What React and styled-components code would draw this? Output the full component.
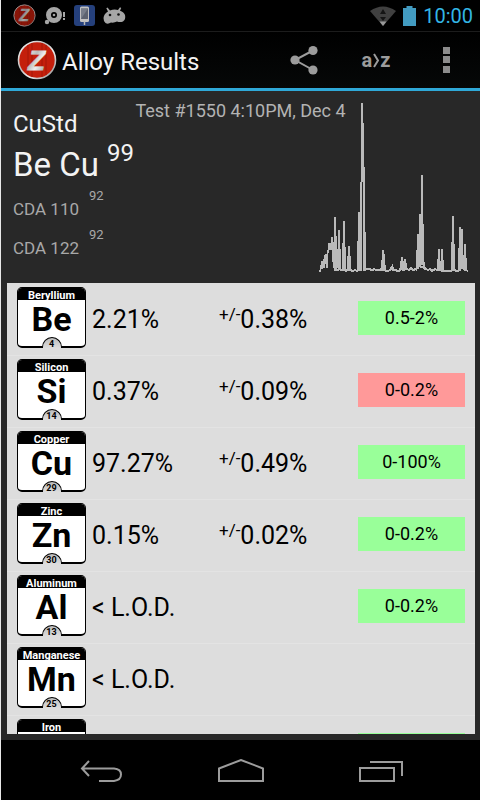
import React from 'react';
import styled, { createGlobalStyle } from 'styled-components';

const GlobalStyle = createGlobalStyle`
  * {
    box-sizing: border-box;
  }

  body {
    margin: 0;
    background: #000;
    font-family: Roboto, 'Noto Sans', sans-serif;
  }

  button {
    display: flex;
    align-items: center;
    justify-content: center;
    padding: 0;
    border: none;
    background: none;
    color: inherit;
    font: inherit;
    cursor: pointer;
  }
`;

const Screen = styled.div`
  display: flex;
  flex-direction: column;
  height: 100vh;
  border-left: 1px solid #e8e8e8;
  background: #282828;
  color: #f3f3f3;
`;

const StatusBar = styled.div`
  display: flex;
  flex: none;
  align-items: center;
  height: 32px;
  padding: 0 7px 0 12px;
  border-bottom: 1px solid #1c1c1c;
  background: #000;
`;

const StatusIcons = styled.div`
  display: flex;
  flex: 1;
  align-items: center;
  gap: 8px;
`;

const SystemIcons = styled.div`
  display: flex;
  align-items: center;
  gap: 7px;
`;

const Clock = styled.time`
  color: #33b5e5;
  font-size: 20px;
  line-height: 24px;
`;

const ActionBar = styled.header`
  display: flex;
  flex: none;
  align-items: center;
  height: 59px;
  padding-left: 16px;
  border-bottom: 3px solid #2fa9d8;
  background: linear-gradient(#000, #060808);
`;

const Title = styled.h1`
  flex: 1;
  margin: 0;
  padding: 4px 0 0 5px;
  font-size: 24px;
  font-weight: 400;
  line-height: 32px;
  white-space: nowrap;
`;

const Action = styled.button`
  width: ${props => props.$width || 72}px;
  height: 56px;
`;

const Summary = styled.section`
  display: grid;
  flex: none;
  padding: 8px 12px 11px;

  > * {
    grid-area: 1 / 1;
  }
`;

const TestLabel = styled.div`
  justify-self: center;
  color: #b3b3b3;
  font-size: 18px;
  line-height: 24px;
`;

const Matches = styled.div`
  display: flex;
  flex-direction: column;
  padding: 10px 0 5px;
`;

const Sample = styled.div`
  font-size: 24px;
  line-height: 30px;
`;

const Match = styled.div`
  display: flex;
  align-items: flex-start;
  gap: 10px;
  height: 39px;
  color: #a8a8a8;
  font-size: 17px;
  line-height: 40px;
`;

const Score = styled.span`
  font-size: 13px;
  line-height: 14px;
`;

const BestMatch = styled(Match)`
  gap: 8px;
  height: 50px;
  color: #f3f3f3;
  font-size: 33px;
  line-height: 52px;

  ${Score} {
    font-size: 24px;
    line-height: 28px;
  }
`;

const Spectrum = styled.svg`
  justify-self: end;
  align-self: end;
  color: #bababa;
`;

const ResultList = styled.main`
  flex: 1;
  min-height: 0;
  margin: 0 5px 6px 6px;
  overflow-y: auto;
  scrollbar-width: none;
  background: #ddd;
  color: #000;
`;

const ResultTable = styled.table`
  width: 100%;
  border-collapse: collapse;
  table-layout: fixed;
`;

const Row = styled.tr`
  height: 72px;
  border-bottom: 1px solid #e3e3e3;
`;

const Cell = styled.td`
  padding: 2px 0 0;
  font-size: 25px;
  font-weight: 400;
  line-height: 32px;
  text-align: left;
  white-space: nowrap;
`;

const TileCell = styled(Cell).attrs({ as: 'th', scope: 'row' })`
  width: 85px;
  padding: 0 0 3px 10px;
`;

const AmountCell = styled(Cell)`
  width: 127px;
`;

const RangeCell = styled(Cell)`
  width: 117px;
  padding: 0 10px 2px 0;
`;

const PlusMinus = styled.span`
  display: inline-block;
  vertical-align: 8px;
  font-size: 17px;
  line-height: 16px;
`;

const Range = styled.div`
  background: ${props => (props.$out ? '#ff9999' : '#99ff99')};
  font-size: 18px;
  line-height: 34px;
  text-align: center;
`;

const Tile = styled.div`
  position: relative;
  width: 69px;
  height: 61px;
  border: 1px solid #000;
  border-bottom-width: 2px;
  border-radius: 5px;
  background: #fff;
  text-align: center;
`;

const ElementName = styled.div`
  height: 12px;
  border-radius: 4px 4px 0 0;
  background: #000;
  color: #fff;
  font-size: 11px;
  font-weight: 700;
  line-height: 15px;
`;

const Symbol = styled.div`
  padding-top: 2px;
  font-size: 34px;
  font-weight: 700;
  line-height: 34px;
`;

const AtomicNumber = styled.div`
  position: absolute;
  bottom: -2px;
  left: 50%;
  width: 20px;
  height: 11px;
  margin-left: -10px;
  border: 1px solid #000;
  border-bottom: none;
  border-radius: 10px 10px 0 0;
  background: linear-gradient(#bbb, #ddd);
  font-size: 9px;
  font-weight: 700;
  line-height: 12px;
`;

const NavBar = styled.nav`
  display: flex;
  flex: none;
  height: 60px;
  padding: 0 30px;
  background: #000;
`;

const NavButton = styled.button`
  flex: 1;
  height: 100%;
  padding-top: 4px;
`;

const elements = [
  { name: 'Beryllium', symbol: 'Be', number: 4, amount: '2.21%', error: '0.38%', range: '0.5-2%' },
  { name: 'Silicon', symbol: 'Si', number: 14, amount: '0.37%', error: '0.09%', range: '0-0.2%', out: true },
  { name: 'Copper', symbol: 'Cu', number: 29, amount: '97.27%', error: '0.49%', range: '0-100%' },
  { name: 'Zinc', symbol: 'Zn', number: 30, amount: '0.15%', error: '0.02%', range: '0-0.2%' },
  { name: 'Aluminum', symbol: 'Al', number: 13, range: '0-0.2%' },
  { name: 'Manganese', symbol: 'Mn', number: 25 },
  { name: 'Iron', symbol: 'Fe', number: 26, range: '0-0.2%' },
];

// [x, width, top, bottom] of each run of channels
const channels = [
  [1, 1, 162, 168], [2, 2, 158, 166], [4, 1, 156, 165], [5, 1, 152, 165],
  [6, 2, 151, 161], [7, 2, 151, 165], [8, 1, 147, 165], [9, 1, 140, 150],
  [10, 2, 140, 147], [12, 1, 134, 147], [13, 1, 134, 159], [14, 1, 139, 165],
  [15, 2, 114, 168], [17, 1, 133, 168], [18, 1, 146, 165], [19, 2, 127, 166],
  [21, 1, 146, 166], [23, 1, 140, 168], [24, 2, 118, 168], [26, 1, 144, 168],
  [28, 1, 153, 168], [29, 2, 143, 168], [31, 1, 153, 168], [38, 1, 138, 168],
  [39, 2, 109, 168], [41, 1, 79, 168], [42, 1, 0, 168], [43, 1, 0, 79],
  [44, 1, 20, 129], [44, 1, 79, 168], [45, 1, 64, 168], [46, 1, 129, 168],
  [62, 1, 157, 168], [63, 2, 147, 168], [65, 1, 151, 168], [66, 1, 162, 168],
  [73, 1, 161, 168], [74, 1, 164, 168], [81, 1, 158, 166], [82, 2, 154, 166],
  [84, 1, 158, 168], [85, 2, 156, 166], [87, 1, 160, 167], [97, 1, 147, 168],
  [98, 2, 131, 166], [100, 2, 111, 162], [102, 2, 72, 162], [104, 1, 121, 164],
  [105, 1, 159, 167], [118, 1, 156, 168], [119, 2, 146, 168], [121, 1, 158, 168],
  [122, 2, 146, 168], [124, 1, 157, 168], [132, 1, 139, 168], [133, 2, 113, 168],
  [135, 1, 141, 168], [139, 1, 145, 168], [140, 2, 124, 168], [142, 2, 126, 163],
  [144, 1, 152, 166], [145, 2, 141, 168], [147, 1, 155, 167],
];

const channelPath = channels
  .map(([x, width, top, bottom]) => `M${x} ${top}h${width}V${bottom}h-${width}z`)
  .join('');

function SpectrumChart() {
  return (
    <Spectrum width="149" height="169" viewBox="0 0 149 169" role="img" aria-label="Spectrum">
      <g shapeRendering="crispEdges">
        <path d={channelPath} fill="currentColor" />
        <path
          d="M0 168H2M17 167H19L20 165L22 167L25 166L27 168L29 166L31 167L34 168L36 167L38 168L40 166M46 166H51L52 167H54L55 166L57 167H60L62 166V168M66 168H69L71 167L73 164L75 167L80 168L82 165L84 167L88 166L90 167L92 165L94 167L97 166L99 163L104 164L107 166L109 167L111 166L113 168L116 166L118 167L121 165L123 168H132L134 167L139 168L141 166L143 163L145 166L147 167L149 168"
          fill="none"
          stroke="currentColor"
          strokeWidth="2"
        />
      </g>
    </Spectrum>
  );
}

function AppLogo({ size, id, dim }) {
  return (
    <svg width={size} height={size} viewBox="0 0 40 40" opacity={dim ? 0.7 : 1} aria-hidden="true">
      <defs>
        <linearGradient id={id} x1="0" y1="0" x2="1" y2="1">
          <stop offset="0" stopColor="#fff" />
          <stop offset="0.4" stopColor="#bbb" />
          <stop offset="0.6" stopColor="#eee" />
          <stop offset="1" stopColor="#888" />
        </linearGradient>
      </defs>
      <circle cx="20" cy="20" r="18.5" fill="#c41f0c" stroke={`url(#${id})`} strokeWidth="1.6" />
      <path d="M11 5v30M15 3v34M25 3v34M29 5v30" stroke="#a91a0a" strokeWidth="1.2" />
      <text
        x="19.5"
        y="29.5"
        textAnchor="middle"
        fontFamily="'Liberation Sans', sans-serif"
        fontSize="28"
        fontWeight="700"
        fontStyle="italic"
        fill={`url(#${id})`}
        stroke={`url(#${id})`}
        strokeWidth="0.8"
      >
        Z
      </text>
    </svg>
  );
}

function DiscIcon() {
  return (
    <svg width="22" height="20" viewBox="0 0 22 20" fill="#a6a6a6" aria-hidden="true">
      <path fillRule="evenodd" d="M10 1a8 8 0 1 1 0 16a8 8 0 0 1 0-16zM10 6a3 3 0 1 0 0 6a3 3 0 0 0 0-6z" />
      <circle cx="10" cy="9" r="1.3" />
      <circle cx="3" cy="16" r="2.2" />
      <path d="M19 6h2v5h-2zM19 12h2v2h-2z" />
    </svg>
  );
}

function PhoneIcon() {
  return (
    <svg width="21" height="21" viewBox="0 0 21 21" aria-hidden="true">
      <rect width="21" height="21" rx="3" fill="#25407c" />
      <rect x="6" y="1.5" width="9" height="15.5" rx="1.5" fill="#c2c2c2" />
      <rect x="7" y="3.5" width="7" height="10.5" fill="#5d6370" />
      <path d="M7 14V3.5h7z" fill="#777d89" />
      <path d="M10.5 16v4" stroke="#b9b9b9" strokeWidth="1.5" />
    </svg>
  );
}

function AndroidIcon() {
  return (
    <svg width="23" height="18" viewBox="0 0 23 18" aria-hidden="true">
      <path
        d="M4.500 .5L7 3.500Q11 2 15 3L17 .3L18.200 1L17 3.700Q21 5 22 8Q23 12.500 20 14.500Q17 15.500 14 14.500Q11 16 8 15.500Q5 17.500 2.500 16Q.5 14.500 .5 11Q1 6.500 5 4.500L3.300 1.300z"
        fill="#a6a6a6"
      />
      <circle cx="7" cy="8" r="1.3" fill="#111" />
      <circle cx="15.5" cy="7.5" r="1.3" fill="#111" />
    </svg>
  );
}

function WifiIcon() {
  return (
    <svg width="26" height="20" viewBox="0 0 26 20" aria-hidden="true">
      <path d="M0 5Q13-4 26 5L13 20z" fill="#404040" />
      <path d="M9.5 15.5h7L13 20z" fill="#999" />
      <path d="M13 3l3 5h-6zM10 11h6l-3 4z" fill="#151515" />
    </svg>
  );
}

function BatteryIcon() {
  return (
    <svg width="13" height="20" viewBox="0 0 13 20" aria-hidden="true">
      <path d="M3.5 0h6v2H13v18H0V2h3.500z" fill="#429bc1" />
    </svg>
  );
}

function ShareIcon() {
  return (
    <svg width="28" height="30" viewBox="0 0 28 30" fill="#9c9c9c" aria-hidden="true">
      <path d="M23 5.5L5 15l18 10" fill="none" stroke="#9c9c9c" strokeWidth="2" />
      <circle cx="23" cy="5.5" r="4.6" />
      <circle cx="5" cy="15" r="4.6" />
      <circle cx="23" cy="25" r="4.6" />
    </svg>
  );
}

const SortLabel = styled.span`
  display: flex;
  align-items: center;
  color: #9c9c9c;
  font-size: 20px;
  font-weight: 700;
  line-height: 24px;
`;

function Chevron() {
  return (
    <svg width="8" height="15" viewBox="0 0 8 15" aria-hidden="true">
      <path d="M2 1l4 6.500l-4 6.500" fill="none" stroke="#9c9c9c" strokeWidth="2" />
    </svg>
  );
}

function OverflowIcon() {
  return (
    <svg width="7" height="26" viewBox="0 0 7 26" fill="#8c8c8c" aria-hidden="true">
      <path d="M0 0h7v7H0zM0 9h7v7H0zM0 19h7v7H0z" />
    </svg>
  );
}

function NavIcon({ d, width }) {
  return (
    <svg width={width} height="26" viewBox={`0 0 ${width} 26`} aria-hidden="true">
      <path d={d} fill="none" stroke="#9c9c9c" strokeWidth="2" />
    </svg>
  );
}

function ResultRow({ element }) {
  return (
    <Row>
      <TileCell>
        <Tile>
          <ElementName>{element.name}</ElementName>
          <Symbol>{element.symbol}</Symbol>
          <AtomicNumber>{element.number}</AtomicNumber>
        </Tile>
      </TileCell>
      <AmountCell>{element.amount || '< L.O.D.'}</AmountCell>
      <Cell>
        {element.error && (
          <>
            <PlusMinus>+/-</PlusMinus>
            {element.error}
          </>
        )}
      </Cell>
      <RangeCell>
        {element.range && <Range $out={element.out}>{element.range}</Range>}
      </RangeCell>
    </Row>
  );
}

export default function App() {
  return (
    <Screen>
      <GlobalStyle />
      <StatusBar>
        <StatusIcons>
          <AppLogo size={23} id="metal-small" dim />
          <DiscIcon />
          <PhoneIcon />
          <AndroidIcon />
        </StatusIcons>
        <SystemIcons>
          <WifiIcon />
          <BatteryIcon />
          <Clock>10:00</Clock>
        </SystemIcons>
      </StatusBar>

      <ActionBar>
        <AppLogo size={40} id="metal" />
        <Title>Alloy Results</Title>
        <Action aria-label="Share">
          <ShareIcon />
        </Action>
        <Action aria-label="Sort by name">
          <SortLabel>
            a<Chevron />z
          </SortLabel>
        </Action>
        <Action $width={68} aria-label="More options">
          <OverflowIcon />
        </Action>
      </ActionBar>

      <Summary>
        <Matches>
          <Sample>CuStd</Sample>
          <BestMatch>
            Be Cu <Score>99</Score>
          </BestMatch>
          <Match>
            CDA 110 <Score>92</Score>
          </Match>
          <Match>
            CDA 122 <Score>92</Score>
          </Match>
        </Matches>
        <SpectrumChart />
        <TestLabel>Test #1550 4:10PM, Dec 4</TestLabel>
      </Summary>

      <ResultList>
        <ResultTable>
          <tbody>
            {elements.map(element => (
              <ResultRow key={element.symbol} element={element} />
            ))}
          </tbody>
        </ResultTable>
      </ResultList>

      <NavBar>
        <NavButton aria-label="Back">
          <NavIcon width={42} d="M9 2L2 9.500L9 17M2 9.500H34Q41 10 41 15.500T34 22H19" />
        </NavButton>
        <NavButton aria-label="Home">
          <NavIcon width={46} d="M1 22V9.500L23 1L45 9.500V22z" />
        </NavButton>
        <NavButton aria-label="Recent apps">
          <NavIcon width={46} d="M3 9h34v13H3zM13 3h32v14" />
        </NavButton>
      </NavBar>
    </Screen>
  );
}
